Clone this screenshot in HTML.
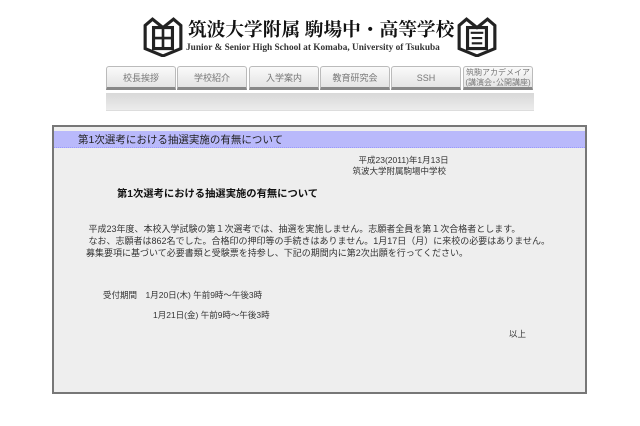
<!DOCTYPE html>
<html><head><meta charset="utf-8"><style>
body{margin:0;width:640px;height:426px;background:#fff;position:relative;font-family:"Liberation Sans","Noto Sans CJK JP",sans-serif;overflow:hidden}
.a{position:absolute;white-space:nowrap}
.tab{position:absolute;top:66px;height:24px;width:70px;background:linear-gradient(#fafafa,#e4e4e4);border:1px solid #bbb;border-bottom:3px solid #888;border-radius:3px 3px 0 0;font-size:9px;color:#777;text-align:center;line-height:12px;box-sizing:border-box;padding-top:5px}
.emb{position:absolute;top:17px;width:42px;height:40px}
</style></head><body>
<svg class="emb" style="left:142px" viewBox="0 0 40 38"><path d="M3 8 L10 2 L20 10 L30 2 L37 8 L37 30 L20 37 L3 30Z" fill="#fff" stroke="#222" stroke-width="3"/><rect x="11" y="10" width="18" height="20" fill="none" stroke="#222" stroke-width="3"/><path d="M20 10V30M12 20H28" stroke="#222" stroke-width="2.5"/></svg>
<svg class="emb" style="left:456px" viewBox="0 0 40 38"><path d="M3 8 L10 2 L20 10 L30 2 L37 8 L37 30 L20 37 L3 30Z" fill="#fff" stroke="#222" stroke-width="3"/><rect x="11" y="10" width="18" height="20" fill="none" stroke="#222" stroke-width="3"/><path d="M14 15H26M15 20H25M15 25H25" stroke="#222" stroke-width="2"/></svg>
<div class="a" style="left:188px;top:20px;font-family:'Liberation Serif','Noto Serif CJK SC',serif;font-size:18.7px;line-height:22px;color:#111;font-weight:bold">筑波大学附属 駒場中・高等学校</div>
<div class="a" style="left:186px;top:43px;font-family:'Liberation Serif',serif;font-size:9.3px;font-weight:bold;color:#333">Junior &amp; Senior High School at Komaba, University of Tsukuba</div>
<div class="tab" style="left:106px">校長挨拶</div>
<div class="tab" style="left:177px">学校紹介</div>
<div class="tab" style="left:249px">入学案内</div>
<div class="tab" style="left:320px">教育研究会</div>
<div class="tab" style="left:391px">SSH</div>
<div class="tab" style="left:463px;padding-top:1px;font-size:8px;line-height:10px">筑駒アカデメイア<br>(講演会･公開講座)</div>
<div class="a" style="left:106px;top:93px;width:428px;height:17px;background:linear-gradient(#d8d8d8,#ececec);border-bottom:1px solid #ddd"></div>
<div class="a" style="left:52px;top:125px;width:531px;height:265px;background:#eeeeee;border:2px solid #777"></div>
<div class="a" style="left:54px;top:131px;width:531px;height:16px;background:#b9b9fb;border-bottom:1px dotted #99f"></div>
<div class="a" style="left:78px;top:132px;font-size:10.5px;color:#222">第1次選考における抽選実施の有無について</div>
<div class="a" style="left:350px;top:155px;font-size:8.5px;color:#333;text-align:center;line-height:11px">　平成23(2011)年1月13日<br>筑波大学附属駒場中学校</div>
<div class="a" style="left:117px;top:185px;font-size:10.3px;font-weight:bold;color:#111">第1次選考における抽選実施の有無について</div>
<div class="a" style="left:86px;top:223px;font-size:9px;color:#333;line-height:12px">&nbsp;平成23年度、本校入学試験の第１次選考では、抽選を実施しません。志願者全員を第１次合格者とします。<br>&nbsp;なお、志願者は862名でした。合格印の押印等の手続きはありません。1月17日（月）に来校の必要はありません。<br>募集要項に基づいて必要書類と受験票を持参し、下記の期間内に第2次出願を行ってください。</div>
<div class="a" style="left:103px;top:289px;font-size:8.5px;color:#333">受付期間　1月20日(木) 午前9時～午後3時</div>
<div class="a" style="left:153px;top:309px;font-size:8.5px;color:#333">1月21日(金) 午前9時～午後3時</div>
<div class="a" style="left:509px;top:328px;font-size:8.5px;color:#333">以上</div>
</body></html>
